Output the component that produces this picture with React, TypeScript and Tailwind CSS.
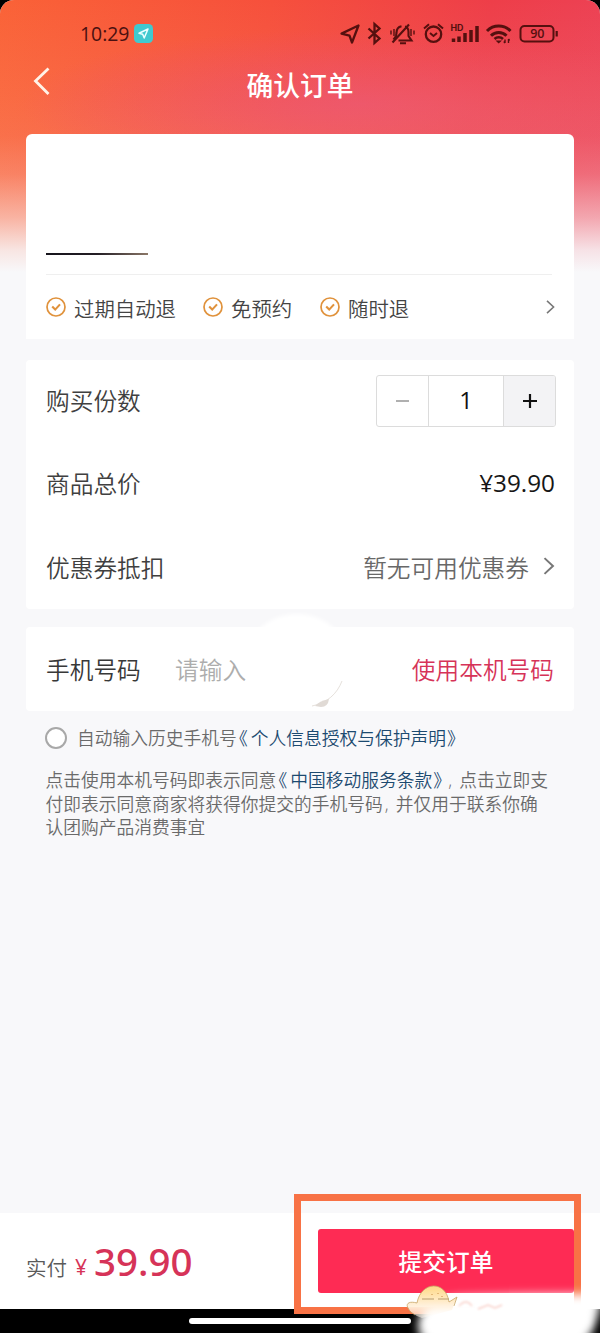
import React from "react";

const cjk = "font-['Open_Sans','Noto_Sans_CJK_SC',sans-serif]";

function Check() {
  return (
    <svg className="h-[20px] w-[20px] shrink-0" viewBox="0 0 20 20" fill="none" stroke="#e0923c">
      <circle cx="10" cy="10" r="9" strokeWidth="1.7" />
      <path d="M6.2 9.6 9.2 12.6 14 7.4" strokeWidth="2.1" />
    </svg>
  );
}

function Perk({ text, className }: { text: string; className: string }) {
  return (
    <div className={"flex items-center " + className}>
      <Check />
      <span className="relative top-[2px] ml-[8px] text-[20.4px] leading-[30px] text-[#444]">{text}</span>
    </div>
  );
}

function Chevron({ className }: { className: string }) {
  return (
    <svg className={className} viewBox="0 0 10 16" fill="none" stroke="#777" strokeWidth="1.8">
      <path d="M1 1 8.500 8 1 15" />
    </svg>
  );
}

function StatusIcons() {
  return (
    <svg className="absolute left-[335px] top-[15px] h-[36px] w-[230px]" viewBox="335 15 230 36" fill="none" stroke="#55100f" strokeWidth="2">
      <path d="M358.500 25.500 341.500 33.600 349.500 35.600 352 42.500Z" strokeWidth="2.300" strokeLinejoin="round" />
      <path d="M368.500 28.500 379.500 38.500 374.500 43V24L379.500 28.500 368.500 38.500" strokeWidth="2.300" />
      <path d="M398.500 40.500H411.500L408.500 36V32C408.500 29 407 27 405 26.500M401.500 26.300C397.500 27 396.500 30 396.500 33L396 36 393.500 39.500M392.500 42.500 409 24.500M400 43.300H406" strokeWidth="2.100" />
      <path d="M391 30.500V34.500M394 29V36M411 29V36M414 30.500V34.500" strokeWidth="1.400" />
      <circle cx="433.500" cy="34.200" r="7.700" strokeWidth="2.300" />
      <path d="M424 28.500 429 24.300M438 24.300 443 28.500M430 33 433.500 36 437 33" />
      <path d="M453.500 42V38.500M459 42V36.500M465 42V33M471 42V30M477 42V26" strokeWidth="3.500" />
      <path d="M487 31A16.500 16.500 0 0 1 510.500 31M491 35.700A11 11 0 0 1 506.500 35.700" strokeWidth="3" />
      <path d="M494.500 39A6 6 0 0 1 503 39" strokeWidth="2.600" />
      <path d="M495.500 40.500H502L498.700 43.500Z" fill="#55100f" stroke="none" />
      <path d="M505 39.500V43M508.500 39V43M503.800 41.500 505 43M508.500 39 509.700 40.500" strokeWidth="1.400" />
      <rect x="520.500" y="26" width="33" height="15.500" rx="4" />
      <path d="M556.700 31V36.500" strokeWidth="2.200" />
      <text x="450.500" y="31" fontSize="8.500" fontWeight="700" fontFamily="Inter, sans-serif" fill="#55100f" stroke="none" textLength="13" lengthAdjust="spacingAndGlyphs">HD</text>
      <text x="537.300" y="38.200" fontSize="12.500" fontWeight="600" fontFamily="'Open Sans', sans-serif" fill="#55100f" stroke="none" textAnchor="middle">90</text>
    </svg>
  );
}

function Header() {
  return (
    <header className="relative h-[134px] shrink-0">
      <span className="absolute left-[80px] top-[22px] text-[19.400px] font-medium leading-[24px] text-[#4a1010]">10:29</span>
      <svg className="absolute left-[134px] top-[24px] h-[19px] w-[19px]" viewBox="0 0 19 19">
        <rect width="19" height="19" rx="4.500" fill="#40c9cf" />
        <path d="M14 5 5 9.200 8.700 10.300 10.200 14Z" fill="none" stroke="#eaffff" strokeWidth="1.500" strokeLinejoin="round" />
      </svg>
      <StatusIcons />
      <svg className="absolute left-[32px] top-[66px] h-[30px] w-[20px]" viewBox="0 0 20 30" fill="none" stroke="#fff3e8" strokeWidth="2.800">
        <path d="M16.500 2.500 3.500 15 16.500 28" />
      </svg>
      <h1 className="pt-[67px] text-center text-[26.800px] font-medium leading-[38px] text-white">确认订单</h1>
    </header>
  );
}

function Watermark() {
  return (
    <svg className="absolute left-[360px] top-[1270px] h-[63px] w-[240px]" viewBox="360 1270 240 63">
      <defs>
        <filter id="soft" x="-20%" y="-60%" width="140%" height="220%"><feGaussianBlur stdDeviation="5" /></filter>
        <filter id="faint" x="-20%" y="-50%" width="140%" height="200%"><feGaussianBlur stdDeviation="1" /></filter>
        <linearGradient id="duck" x1="0" y1="0" x2="0" y2="1">
          <stop offset="0" stopColor="#ffd985" />
          <stop offset="0.600" stopColor="#fff0da" />
          <stop offset="1" stopColor="#fff8ee" stopOpacity="0.500" />
        </linearGradient>
      </defs>
      <path d="M426 1344Q408 1322 432 1302L456 1297Q510 1294 600 1294L600 1308 596 1320 586 1344Z" fill="#fff" filter="url(#soft)" />
      <path d="M417 1303C410 1301 406 1303 407.500 1307Q410 1314 422 1318L452 1310 457 1297 449 1302C446 1280 421 1281 417 1303Z" fill="url(#duck)" />
      <path d="M417 1303C410 1301 406 1303 407.500 1307Q409 1312 415 1315M454 1306 457 1297 449 1302C446 1280 421 1281 417 1303" fill="none" stroke="#c8a566" strokeWidth="0.800" />
      <path d="M422 1299H434M438 1299H449" stroke="#b79c6c" strokeWidth="1" />
      <path d="M432 1294V1295M438 1293V1294M442 1296V1297" stroke="#d29b55" strokeWidth="1.200" />
      <path d="M430 1312H590V1328H424Z" fill="#fff" filter="url(#soft)" />
      <path d="M459 1306Q466 1298 472 1306M478 1309 488 1305 495 1308 502 1305" fill="none" stroke="#f9d0c9" strokeWidth="1.500" filter="url(#faint)" />
    </svg>
  );
}

function Open() {
  return <span className="inline-block w-[14px] pl-[2px] [font-feature-settings:'halt']">《</span>;
}

function Close() {
  return <span className="inline-block w-[14px] pl-[1px] [font-feature-settings:'halt']">》</span>;
}

function Comma() {
  return <span className="inline-block w-[13px] pl-[2px]">,</span>;
}

export default function App() {
  return (
    <div className="h-[1333px] w-[600px] overflow-hidden bg-black">
      <div className={"relative flex h-[1333px] w-[600px] flex-col overflow-hidden rounded-t-[14px] bg-[#f8f8fa] font-[350] " + cjk}>
        <div className="absolute inset-x-0 top-0 h-[272px] bg-[linear-gradient(to_bottom,transparent_0%,#f8d0b018_35%,#f8e0d020_50%,#f8ece840_64%,#f8f4f490_80%,#f8f8fae0_92%,#f8f8fa_100%),radial-gradient(ellipse_340px_75px_at_60%_38%,#ed4a62_0%,#ed4a6200_100%),linear-gradient(100deg,#fa6237_0%,#f6503c_42%,#ee3e49_76%,#ec4258_100%)]" />
        <Header />

        <section className="relative mx-[26px] h-[205px] shrink-0 rounded-t-[6px] bg-white px-[20px]">
          <div className="mr-[2px] h-[141px] border-b border-[#efefef] pt-[119px]">
            <div className="h-[2px] w-[102px] bg-linear-to-r from-[#16141c] via-[#241e25] to-[#8c7868]" />
          </div>
          <div className="flex h-[64px] items-center">
            <Perk text="过期自动退" className="w-[157px]" />
            <Perk text="免预约" className="w-[117px]" />
            <Perk text="随时退" className="w-[116px]" />
            <Chevron className="ml-auto mr-[-1px] h-[14px] w-[9px]" />
          </div>
        </section>

        <section className="relative mx-[26px] mt-[21px] h-[249px] shrink-0 rounded-[4px] bg-white px-[20px] text-[23.700px] text-[#404040]">
          <div className="flex h-[81px] items-center justify-between">
            <span className="relative top-px">购买份数</span>
            <div className="mr-[-2px] flex h-[52px] w-[180px] overflow-hidden rounded-[3px] border border-[#dcdcdc]">
              <button className="flex w-[52px] items-center justify-center border-r border-[#dcdcdc]"><i className="h-[2px] w-[13px] bg-[#b0b0b0]" /></button>
              <span className="flex flex-1 items-center justify-center font-normal text-[#111]">1</span>
              <button className="flex w-[52px] items-center justify-center border-l border-[#dcdcdc] bg-[#f3f3f5]">
                <svg className="h-[14px] w-[14px]" viewBox="0 0 14 14" stroke="#111" strokeWidth="2.200"><path d="M0 7H14M7 0V14" /></svg>
              </button>
            </div>
          </div>
          <div className="flex h-[84px] items-center justify-between">
            <span className="relative top-[2px]">商品总价</span>
            <span className="mr-[-1px] text-[24.300px] font-normal text-[#161616]">¥39.90</span>
          </div>
          <div className="flex h-[83px] items-center justify-between">
            <span className="relative top-[2px]">优惠券抵扣</span>
            <span className="flex items-center text-[#686868]"><span className="relative top-[2px]">暂无可用优惠券</span><Chevron className="ml-[14px] mr-[-1px] h-[18px] w-[12px]" /></span>
          </div>
        </section>

        <section className="relative mx-[26px] mt-[18px] flex h-[84px] shrink-0 items-center rounded-[4px] bg-white px-[20px] text-[23.700px] text-[#383838]">
          <div className="absolute left-[220px] top-[-13px] h-[92px] w-[102px] rounded-[50%] bg-white blur-[2px]" />
          <svg className="absolute left-[254px] top-[40px] h-[44px] w-[72px]" viewBox="280 667 72 44" fill="none">
            <path d="M312 706C327 703 337 694 342 681" stroke="#e6e1dc" strokeWidth="1" />
            <path d="M315 706Q319 701 329 699Q328 707 321 707Z" fill="#e0dad5" />
          </svg>
          <span className="relative top-[2px] w-[129px]">手机号码</span>
          <span className="relative top-[2px] text-[#adadad]">请输入</span>
          <span className="relative top-[2px] ml-auto text-[#d63358]">使用本机号码</span>
        </section>

        <div className="relative mt-[14px] flex h-[26px] shrink-0 items-center pl-[45px] text-[17.750px] text-[#6a6a6a]">
          <span className="mr-[10px] h-[22px] w-[22px] rounded-full border-2 border-[#a8a8a8] bg-white" />
          <span>自动输入历史手机号</span>
          <span className="text-[#1c4a70]"><Open />个人信息授权与保护声明<Close /></span>
        </div>

        <div className="relative mt-[18px] ml-[45.500px] shrink-0 whitespace-nowrap text-[17.750px] leading-[23.500px] text-[#6a6a6a]">
          <p>点击使用本机号码即表示同意<span className="text-[#1c4a70]"><Open />中国移动服务条款<Close /></span><Comma />点击立即支</p>
          <p>付即表示同意商家将获得你提交的手机号码<Comma />并仅用于联系你确</p>
          <p>认团购产品消费事宜</p>
        </div>

        <footer className="relative mt-auto flex h-[96px] shrink-0 items-center bg-white pl-[26px]">
          <span className="relative top-[7px] text-[20.500px] text-[#5a5a5a]">实付</span>
          <span className="relative top-[7px] ml-[8px] text-[21px] font-normal text-[#d63358]">¥</span>
          <span className="relative top-px ml-[7px] font-['Noto_Sans',sans-serif] text-[38.500px] font-medium text-[#d63358]">39.90</span>
          <button className="ml-auto mr-[26px] h-[64px] w-[256px] rounded-[3px] bg-[#fe2b54] pt-[3px] text-[23.700px] font-medium text-white">提交订单</button>
        </footer>
        <div className="flex h-[24px] shrink-0 justify-center bg-black pt-[9px]">
          <div className="h-[6px] w-[222px] rounded-full bg-white" />
        </div>

        <div className="absolute left-[294px] top-[1194px] h-[120px] w-[287px] border-[7px] border-[#f87245]" />
        <Watermark />
      </div>
    </div>
  );
}
